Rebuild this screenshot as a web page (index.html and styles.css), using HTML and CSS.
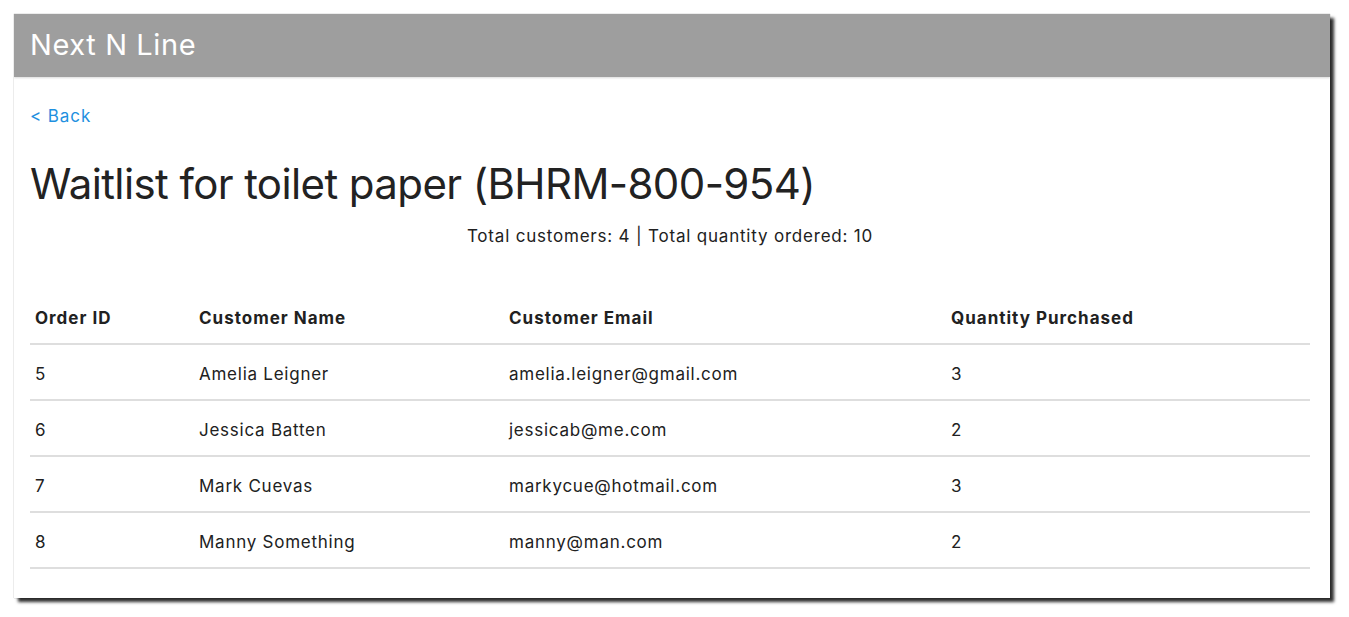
FILE: index.html
```html
<!DOCTYPE html>
<html>
<head>
<meta charset="utf-8">
<link rel="stylesheet" href="styles.css">
</head>
<body>
<div class="window">
  <header class="topbar">Next N Line</header>
  <main class="content">
    <a class="back" href="#">&lt; Back</a>
    <h1 class="title">Waitlist for toilet paper (BHRM-800-954)</h1>
    <p class="summary">Total customers: 4 | Total quantity ordered: 10</p>
    <table class="orders">
      <colgroup>
        <col class="c1"><col class="c2"><col class="c3"><col class="c4">
      </colgroup>
      <thead>
        <tr><th>Order ID</th><th>Customer Name</th><th>Customer Email</th><th>Quantity Purchased</th></tr>
      </thead>
      <tbody>
        <tr><td>5</td><td>Amelia Leigner</td><td>amelia.leigner@gmail.com</td><td>3</td></tr>
        <tr><td>6</td><td>Jessica Batten</td><td>jessicab@me.com</td><td>2</td></tr>
        <tr><td>7</td><td>Mark Cuevas</td><td>markycue@hotmail.com</td><td>3</td></tr>
        <tr><td>8</td><td>Manny Something</td><td>manny@man.com</td><td>2</td></tr>
      </tbody>
    </table>
  </main>
</div>
</body>
</html>
```
FILE: styles.css
```css
html, body {
  margin: 0;
  padding: 0;
  background: #ffffff;
}
body {
  padding: 14px 0 19px 14px;
  font-family: Inter, "Noto Sans", sans-serif;
  color: #212121;
}
.window {
  width: 1316px;
  height: 584px;
  background: #fff;
  box-shadow: 4px 4px 3px rgba(0,0,0,0.82), 0 0 1px rgba(0,0,0,0.45);
  overflow: hidden;
}
.topbar {
  height: 63px;
  line-height: 62px;
  background: #9e9e9e;
  color: #fff;
  font-size: 29px;
  letter-spacing: 0.6px;
  padding-left: 16px;
  box-shadow: 0 1px 2px rgba(0,0,0,0.15);
  position: relative;
}
.content {
  padding: 27px 20px 0 16px;
}
.back {
  display: block;
  color: #1e90e0;
  text-decoration: none;
  font-size: 17px;
  line-height: 24px;
  letter-spacing: 0.9px;
}
.title {
  margin: 30px 0 0 0;
  font-size: 42px;
  font-weight: 400;
  line-height: 52px;
  letter-spacing: -0.6px;
  color: #222;
}
.summary {
  margin: 14px 0 0 0;
  text-align: center;
  font-size: 17px;
  line-height: 24px;
  letter-spacing: 0.8px;
}
.orders {
  margin-top: 43px;
  width: 1280px;
  border-collapse: collapse;
  font-size: 17px;
  line-height: 24px;
}
.c1 { width: 164px; }
.c2 { width: 310px; }
.c3 { width: 442px; }
.c4 { width: 364px; }
.orders th {
  text-align: left;
  font-weight: 700;
  padding: 15px 5px 13px;
  border-bottom: 2px solid #dedede;
  vertical-align: middle;
  letter-spacing: 1px;
}
.orders td {
  padding: 17px 5px 13px;
  border-bottom: 2px solid #dedede;
  vertical-align: middle;
  letter-spacing: 0.75px;
}
```
